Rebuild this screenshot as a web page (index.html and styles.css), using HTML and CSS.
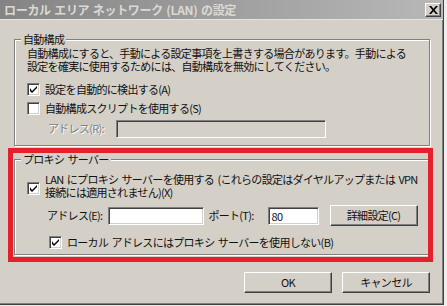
FILE: index.html
```html
<!DOCTYPE html>
<html lang="ja">
<head>
  <meta charset="UTF-8" />
  <title>ローカル エリア ネットワーク (LAN) の設定</title>
  <link rel="stylesheet" href="styles.css">
</head>
<body>
  <div class="window">
    <!-- barra de título -->
    <div class="titlebar">
      <span class="title">ローカル エリア ネットワーク (LAN) の設定</span>
      <span class="close">
        <svg width="9" height="8" viewBox="0 0 9 8"><path d="M0 0h2.2l2.3 2.8L6.8 0H9L5.6 4 9 8H6.8L4.5 5.2 2.2 8H0l3.4-4z" fill="#000"/></svg>
      </span>
    </div>

    <div class="content">
      <!-- 自動構成 -->
      <div class="group group-auto">
        <span class="legend">自動構成</span>
        <p class="desc">自動構成にすると、手動による設定事項を上書きする場合があります。手動による<br>設定を確実に使用するためには、自動構成を無効にしてください。</p>
        <div class="check-row">
          <span class="box"><svg width="7" height="7" viewBox="0 0 7 7"><path d="M0 2v3l2 2 5-5V0L2 5z" fill="#000"/></svg></span>
          <span>設定を自動的に検出する(A)</span>
        </div>
        <div class="check-row">
          <span class="box"></span>
          <span>自動構成スクリプトを使用する(S)</span>
        </div>
        <div class="addr-row addr-auto">
          <span class="lbl disabled">アドレス(R):</span>
          <span class="field field-off field-script"></span>
        </div>
      </div>

      <!-- プロキシ サーバー -->
      <div class="group group-proxy">
        <span class="legend">プロキシ サーバー</span>
        <div class="check-row multi">
          <span class="box"><svg width="7" height="7" viewBox="0 0 7 7"><path d="M0 2v3l2 2 5-5V0L2 5z" fill="#000"/></svg></span>
          <span class="multi-text">LAN にプロキシ サーバーを使用する (これらの設定はダイヤルアップまたは VPN<br>接続には適用されません)(X)</span>
        </div>
        <div class="addr-row addr-proxy">
          <span class="lbl">アドレス(E):</span>
          <span class="field field-addr"></span>
          <span class="lbl lbl-port">ポート(T):</span>
          <span class="field field-port">80</span>
          <span class="btn btn-adv">詳細設定(C)</span>
        </div>
        <div class="check-row sub">
          <span class="box"><svg width="7" height="7" viewBox="0 0 7 7"><path d="M0 2v3l2 2 5-5V0L2 5z" fill="#000"/></svg></span>
          <span>ローカル アドレスにはプロキシ サーバーを使用しない(B)</span>
        </div>
      </div>

      <div class="actions">
        <span class="btn">OK</span>
        <span class="btn">キャンセル</span>
      </div>
    </div>

    <!-- marco rojo de resaltado -->
    <div class="highlight"></div>
  </div>
</body>
</html>
```

FILE: styles.css
```css
* { box-sizing: border-box; margin: 0; padding: 0; }
html, body {
  background: #eeeeec;
}
body {
  font-family: "Noto Sans CJK JP", "Liberation Sans", sans-serif;
  font-size: 11px;
  letter-spacing: -0.7px;
  word-spacing: 1.5px;
  color: #111;
  line-height: 13px;
}

/* ventana */
.window {
  position: relative;
  width: 444px;
  height: 305px;
  background: #d4d0c8;
  border-right: 1px solid #404040;
  border-bottom: 1px solid #404040;
  box-shadow: inset -1px -1px 0 #808080;
}
.titlebar {
  height: 20px;
  background: linear-gradient(to right, #848484, #b8b8b8);
  display: flex;
  align-items: center;
  justify-content: space-between;
  padding: 0 2px 0 4px;
  border-bottom: 1px solid #e6e4de;
}
.title {
  color: #dcd9d2;
  font-weight: bold;
  font-size: 12px;
  letter-spacing: -0.3px;
  word-spacing: 1px;
}
.close {
  width: 16px;
  height: 14px;
  background: #d4d0c8;
  border: 1px solid;
  border-color: #fff #404040 #404040 #fff;
  box-shadow: inset -1px -1px 0 #808080;
  display: flex;
  align-items: center;
  justify-content: center;
}

.content {
  padding: 19px 13px 0 14px;
}

/* grupos */
.group {
  position: relative;
  border: 1px solid #808080;
  box-shadow: 1px 1px 0 #fff, inset 1px 1px 0 #fff;
  padding-left: 12px;
}
.legend {
  position: absolute;
  top: -7px;
  left: 6px;
  padding: 0 2px;
  background: #d4d0c8;
}
.group-auto {
  padding-top: 7px;
  padding-bottom: 7px;
}
.group-proxy {
  margin-top: 13px;
  padding-top: 13px;
  padding-bottom: 2px;
}
.desc {
  margin-bottom: 7px;
}

/* casillas */
.check-row {
  display: flex;
  align-items: center;
  gap: 5px;
  height: 19px;
}
.box {
  width: 13px;
  height: 13px;
  flex: none;
  background: #fff;
  border: 1px solid;
  border-color: #808080 #fff #fff #808080;
  box-shadow: inset 1px 1px 0 #404040, inset -1px -1px 0 #d4d0c8;
  display: flex;
  align-items: center;
  justify-content: center;
}
.check-row.multi {
  height: 26px;
  align-items: flex-start;
}
.check-row.multi .box {
  margin-top: 9px;
}
.check-row.sub {
  margin-top: 7px;
  padding-left: 22px;
}

/* filas de dirección */
.addr-row {
  display: flex;
  align-items: center;
}
.addr-auto {
  margin-top: 1px;
  padding-left: 21px;
  height: 19px;
}
.addr-proxy {
  margin-top: 6px;
  padding-left: 20px;
  height: 21px;
}
.lbl.disabled {
  color: #808080;
  text-shadow: 1px 1px 0 #fff;
}
.field {
  height: 18px;
  background: #fff;
  border: 1px solid;
  border-color: #808080 #fff #fff #808080;
  box-shadow: inset 1px 1px 0 #404040, inset -1px -1px 0 #d4d0c8;
  padding: 2px 3px;
  line-height: 13px;
}
.field-off { background: #d4d0c8; }
.field-script {
  width: 210px;
  margin-left: 12px;
}
.field-addr {
  width: 96px;
  margin-left: 6px;
}
.lbl-port { margin-left: 4px; }
.field-port {
  width: 51px;
  margin-left: 14px;
}

/* botones */
.btn {
  height: 21px;
  background: #d4d0c8;
  border: 1px solid;
  border-color: #fff #404040 #404040 #fff;
  box-shadow: inset -1px -1px 0 #808080;
  display: flex;
  align-items: center;
  justify-content: center;
}
.btn-adv {
  width: 88px;
  margin-left: 11px;
}
.actions {
  display: flex;
  justify-content: flex-end;
  gap: 10px;
  margin-top: 17px;
}
.actions .btn {
  width: 88px;
}

/* resaltado */
.highlight {
  position: absolute;
  left: 8px;
  top: 148px;
  width: 425px;
  height: 114px;
  border: 5px solid #e3202b;
}
```
